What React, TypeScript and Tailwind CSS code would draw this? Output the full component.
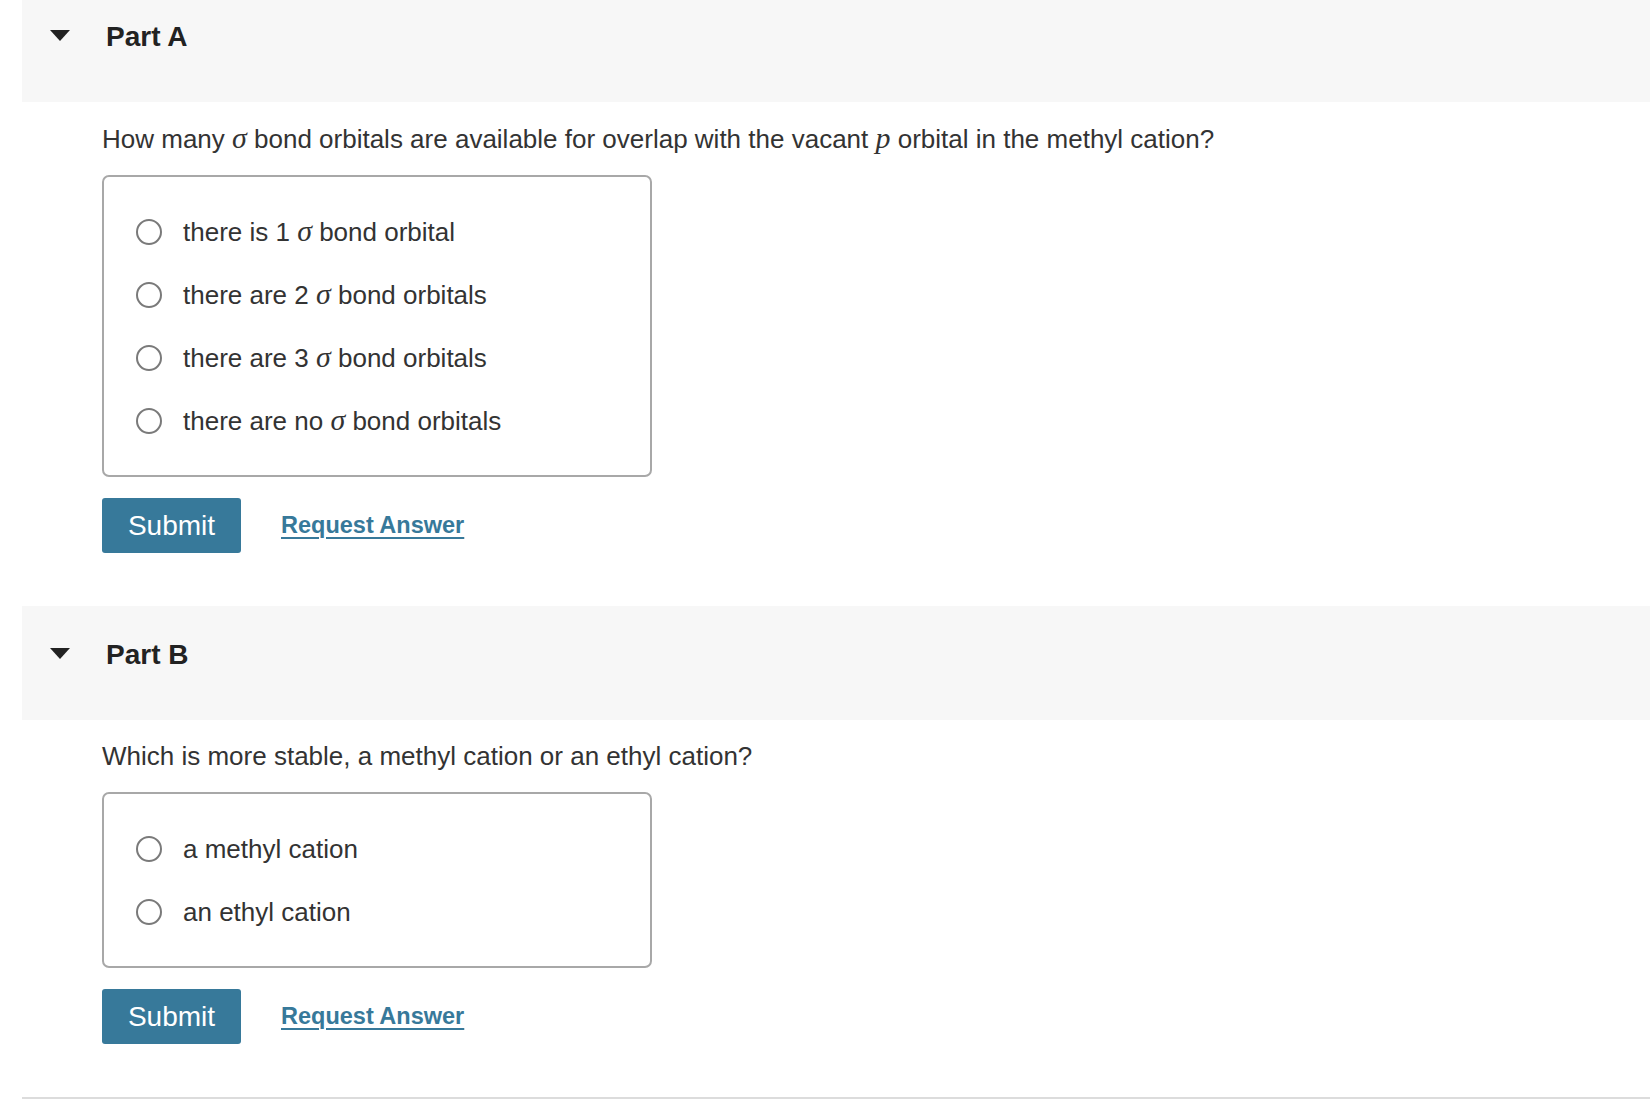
import React, { useState } from 'react';

interface PartProps {
  label: string;
  question: React.ReactNode;
  options: React.ReactNode[];
}

const MathVar = ({ children }: { children: React.ReactNode }) => (
  <span className="font-['Liberation_Serif',serif] italic text-[1.15em] leading-none">{children}</span>
);

const Part: React.FC<PartProps> = ({ label, question, options }) => {
  const [picked, setPicked] = useState<number | null>(null);

  return (
    <section className="mb-[53px]">
      <div className="h-[114px] bg-[#f7f7f7] pl-[28px] pt-[33px] flex items-start">
        <div className="h-[32px] flex items-center gap-[36px]">
          <svg width="20" height="11" viewBox="0 0 20 11" className="mb-[3px]">
            <polygon points="0,0 20,0 10,11" fill="#222" />
          </svg>
          <h2 className="text-[28px] leading-[32px] font-bold text-[#222]">{label}</h2>
        </div>
      </div>

      <div className="pl-[80px]">
        <p className="mt-[21px] text-[26px] leading-[30px] text-[#333]">{question}</p>

        <div className="mt-[21px] w-[550px] border-2 border-[#a8a8a8] rounded-[7px] py-[23px] pl-[32px]">
          {options.map((opt, i) => (
            <label key={i} className="h-[63px] flex items-center gap-[21px] cursor-pointer">
              <span
                onClick={() => setPicked(i)}
                className="w-[26px] h-[26px] rounded-full border-2 border-[#7a7a7a] bg-white flex items-center justify-center shrink-0"
              >
                {picked === i && <span className="w-[11px] h-[11px] rounded-full bg-[#37799a]" />}
              </span>
              <span className="text-[26px] leading-[30px] text-[#333]">{opt}</span>
            </label>
          ))}
        </div>

        <div className="mt-[21px] flex items-center gap-[40px]">
          <button className="w-[139px] h-[55px] rounded-[3px] bg-[#37799a] text-white text-[28px]">
            Submit
          </button>
          <a className="text-[23.5px] font-bold text-[#37799a] underline decoration-2 underline-offset-[4px] cursor-pointer">
            Request Answer
          </a>
        </div>
      </div>
    </section>
  );
};

export default function App() {
  return (
    <div className="min-h-screen bg-white overflow-hidden font-['Liberation_Sans',Arial,sans-serif]">
      <div className="pl-[22px] -mt-[12px]">
        <Part
          label="Part A"
          question={
            <>
              How many <MathVar>σ</MathVar> bond orbitals are available for overlap with the vacant{' '}
              <MathVar>p</MathVar> orbital in the methyl cation?
            </>
          }
          options={[
            <>there is 1 <MathVar>σ</MathVar> bond orbital</>,
            <>there are 2 <MathVar>σ</MathVar> bond orbitals</>,
            <>there are 3 <MathVar>σ</MathVar> bond orbitals</>,
            <>there are no <MathVar>σ</MathVar> bond orbitals</>,
          ]}
        />
        <Part
          label="Part B"
          question="Which is more stable, a methyl cation or an ethyl cation?"
          options={['a methyl cation', 'an ethyl cation']}
        />
        <div className="h-[2px] bg-[#dcdcdc]" />
      </div>
    </div>
  );
}
